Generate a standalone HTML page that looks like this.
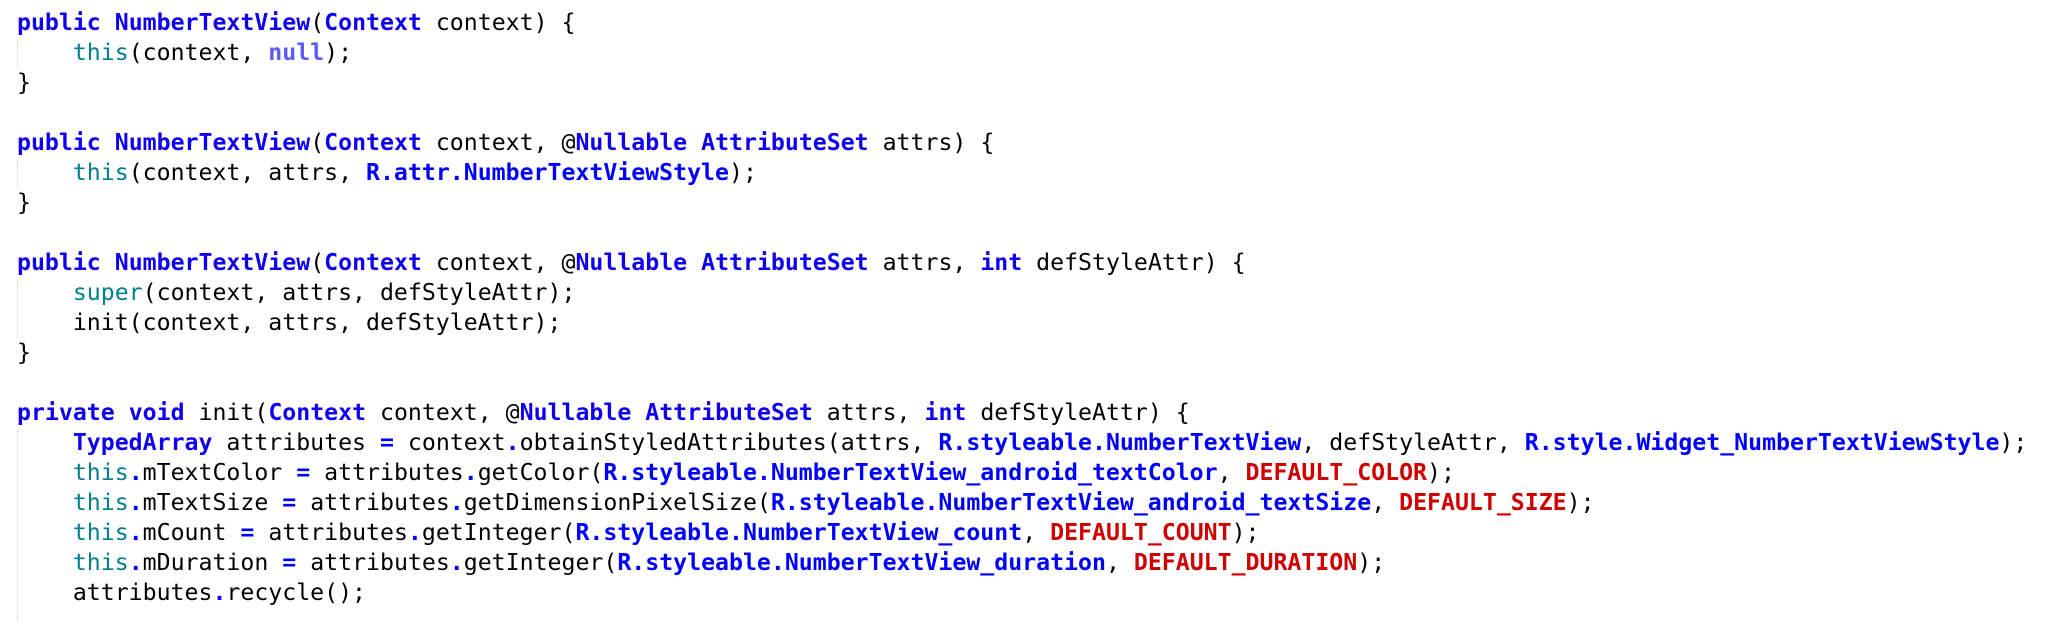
<!DOCTYPE html>
<html><head><meta charset="utf-8"><style>
body{margin:0;background:#fff;width:2054px;height:620px;overflow:hidden}
pre{margin:0;padding:8px 0 0 17px;font-family:"DejaVu Sans Mono","Liberation Mono",monospace;font-size:23.2px;line-height:30px;color:#000;position:relative}
.k{color:#1000f0;font-weight:bold}
.t{color:#00808a}
.n{color:#5a5aff;font-weight:bold}
.r{color:#0000ff;font-weight:bold}
.c{color:#d00000;font-weight:bold}
.g{position:absolute;left:17px;width:0;border-left:1px dotted #ccc}
</style></head><body>
<div class="g" style="top:40px;height:28px"></div>
<div class="g" style="top:160px;height:28px"></div>
<div class="g" style="top:280px;height:58px"></div>
<div class="g" style="top:430px;height:190px"></div>
<pre><span class="k">public</span> <span class="k">NumberTextView</span>(<span class="k">Context</span> context) {
    <span class="t">this</span>(context, <span class="n">null</span>);
}

<span class="k">public</span> <span class="k">NumberTextView</span>(<span class="k">Context</span> context, @<span class="k">Nullable</span> <span class="k">AttributeSet</span> attrs) {
    <span class="t">this</span>(context, attrs, <span class="r">R.attr.NumberTextViewStyle</span>);
}

<span class="k">public</span> <span class="k">NumberTextView</span>(<span class="k">Context</span> context, @<span class="k">Nullable</span> <span class="k">AttributeSet</span> attrs, <span class="k">int</span> defStyleAttr) {
    <span class="t">super</span>(context, attrs, defStyleAttr);
    init(context, attrs, defStyleAttr);
}

<span class="k">private</span> <span class="k">void</span> init(<span class="k">Context</span> context, @<span class="k">Nullable</span> <span class="k">AttributeSet</span> attrs, <span class="k">int</span> defStyleAttr) {
    <span class="k">TypedArray</span> attributes <span class="r">=</span> context<span class="r">.</span>obtainStyledAttributes(attrs, <span class="r">R.styleable.NumberTextView</span>, defStyleAttr, <span class="r">R.style.Widget_NumberTextViewStyle</span>);
    <span class="t">this</span><span class="r">.</span>mTextColor <span class="r">=</span> attributes<span class="r">.</span>getColor(<span class="r">R.styleable.NumberTextView_android_textColor</span>, <span class="c">DEFAULT_COLOR</span>);
    <span class="t">this</span><span class="r">.</span>mTextSize <span class="r">=</span> attributes<span class="r">.</span>getDimensionPixelSize(<span class="r">R.styleable.NumberTextView_android_textSize</span>, <span class="c">DEFAULT_SIZE</span>);
    <span class="t">this</span><span class="r">.</span>mCount <span class="r">=</span> attributes<span class="r">.</span>getInteger(<span class="r">R.styleable.NumberTextView_count</span>, <span class="c">DEFAULT_COUNT</span>);
    <span class="t">this</span><span class="r">.</span>mDuration <span class="r">=</span> attributes<span class="r">.</span>getInteger(<span class="r">R.styleable.NumberTextView_duration</span>, <span class="c">DEFAULT_DURATION</span>);
    attributes<span class="r">.</span>recycle();
</pre>
</body></html>
